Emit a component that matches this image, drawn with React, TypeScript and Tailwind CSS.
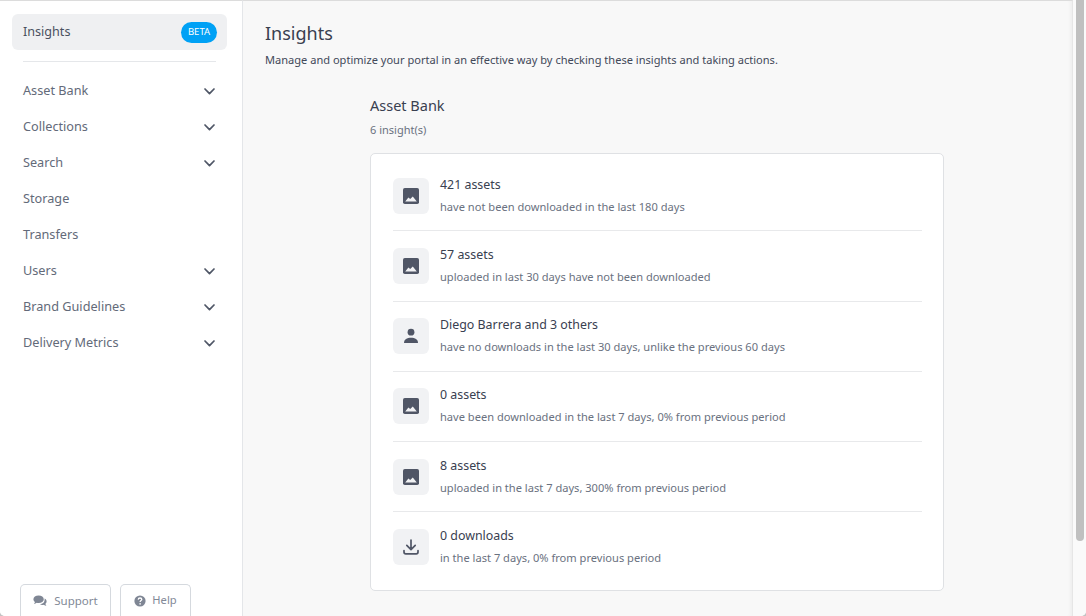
import React from "react";

const font = { fontFamily: '"Noto Sans", sans-serif' };

function Chevron() {
  return (
    <svg width="11" height="7" viewBox="0 0 11 7" fill="none" className="text-[#4f5666]">
      <path d="M1 1 L5.5 5.6 L10 1" stroke="currentColor" strokeWidth="1.7" strokeLinecap="round" strokeLinejoin="round" />
    </svg>
  );
}

function ImageIcon() {
  return (
    <svg width="16" height="16" viewBox="0 0 16 16">
      <rect x="0" y="0" width="16" height="16" rx="1.8" fill="#505666" />
      <path d="M2.2 13.4 L5.4 9.6 L7.2 11 L9.8 8.6 L13.8 13.4 Z" fill="#f1f2f4" />
    </svg>
  );
}

function UserIcon() {
  return (
    <svg width="16" height="16" viewBox="0 0 16 16" fill="#505666">
      <circle cx="8" cy="4.2" r="3.4" />
      <path d="M1 15 C1 11.4 4 9.8 8 9.8 C12 9.8 15 11.4 15 15 Z" />
    </svg>
  );
}

function DownloadIcon() {
  return (
    <svg width="16" height="16" viewBox="0 0 16 16" fill="none" stroke="#505666" strokeWidth="1.7" strokeLinecap="round" strokeLinejoin="round">
      <path d="M8 1 V10.4 M3.8 6.4 L8 10.6 L12.2 6.4" />
      <path d="M1 11.6 V13 C1 14 1.8 14.8 2.8 14.8 H13.2 C14.2 14.8 15 14 15 13 V11.6" />
    </svg>
  );
}

const nav: [string, boolean][] = [
  ["Asset Bank", true],
  ["Collections", true],
  ["Search", true],
  ["Storage", false],
  ["Transfers", false],
  ["Users", true],
  ["Brand Guidelines", true],
  ["Delivery Metrics", true],
];

const rows: [React.ReactNode, string, string][] = [
  [<ImageIcon />, "421 assets", "have not been downloaded in the last 180 days"],
  [<ImageIcon />, "57 assets", "uploaded in last 30 days have not been downloaded"],
  [<UserIcon />, "Diego Barrera and 3 others", "have no downloads in the last 30 days, unlike the previous 60 days"],
  [<ImageIcon />, "0 assets", "have been downloaded in the last 7 days, 0% from previous period"],
  [<ImageIcon />, "8 assets", "uploaded in the last 7 days, 300% from previous period"],
  [<DownloadIcon />, "0 downloads", "in the last 7 days, 0% from previous period"],
];

export default function App() {
  return (
    <div style={font} className="h-[616px] w-[1086px] overflow-hidden bg-[#c4c4c4]">
      <div className="flex h-full overflow-hidden rounded-b-[5px] bg-[#fafafa]">
        <aside className="flex w-[243px] shrink-0 flex-col border-r border-t border-r-[#e4e6e9] border-t-[#dcdcdc] bg-white">
          <div className="ml-3 mr-[15px] mt-[13px] flex h-9 items-center justify-between rounded-md bg-[#eff0f2] pl-[11px] pr-[10px]">
            <span className="text-[12.6px] text-[#4a5060]">Insights</span>
            <span className="flex h-[21px] w-9 items-center justify-center rounded-full bg-[#00a1f5] text-[9.5px] text-white">BETA</span>
          </div>
          <div className="ml-[23px] mr-[26px] mt-[11px] h-px bg-[#e5e7ea]" />
          <nav className="mt-[11px] flex flex-col">
            {nav.map(([label, chev]) => (
              <div key={label} className="flex h-9 items-center justify-between pl-[23px] pr-[27px]">
                <span className="text-[12.7px] text-[#636a79]">{label}</span>
                {chev && <Chevron />}
              </div>
            ))}
          </nav>
          <div className="mt-auto flex gap-[9px] pl-5">
            <div className="flex h-[32px] w-[91px] items-center justify-center gap-[7px] rounded-t-[5px] border border-b-0 border-[#d5d9de] text-[11.5px] text-[#828997]">
              <svg width="14" height="12" viewBox="0 0 14 12" fill="#7f8694">
                <path d="M5.6 0.4 C8.6 0.4 10.8 2 10.8 4.2 C10.8 6.4 8.6 8 5.6 8 C4.9 8 4.3 7.9 3.8 7.8 C3 8.5 2 8.8 0.8 8.9 C1.4 8.3 1.8 7.6 2 6.9 C1 6.3 0.4 5.3 0.4 4.2 C0.4 2 2.6 0.4 5.6 0.4 Z" />
                <path d="M11.6 3.6 C12.9 4.2 13.6 5.2 13.6 6.4 C13.6 7.4 13.1 8.2 12.3 8.8 C12.5 9.5 12.9 10.1 13.4 10.7 C12.4 10.6 11.5 10.2 10.8 9.7 C9.8 10 8.2 10 7 9.3 C9.8 9.2 12 7.4 11.6 3.6 Z" />
              </svg>
              <span>Support</span>
            </div>
            <div className="flex h-[32px] w-[71px] items-center justify-center gap-[6px] rounded-t-[5px] border border-b-0 border-[#d5d9de] text-[11.2px] text-[#828997]">
              <svg width="12" height="12" viewBox="0 0 12 12">
                <circle cx="6" cy="6" r="5.6" fill="#7f8694" />
                <path d="M4.2 4.6 C4.3 3.6 5 3 6 3 C7 3 7.8 3.6 7.8 4.5 C7.8 5.6 6.1 5.6 6.1 6.9" fill="none" stroke="#fff" strokeWidth="1.3" />
                <circle cx="6.1" cy="8.9" r="0.8" fill="#fff" />
              </svg>
              <span>Help</span>
            </div>
          </div>
        </aside>
        <main className="w-[830px] shrink-0 border-r border-t border-r-[#e6e6e6] border-t-[#dcdcdc] bg-[#f8f8f8] pl-[22px] pt-[20px] shadow-[inset_-4px_0_4px_-3px_rgba(0,0,0,0.06)]">
          <h1 className="text-[18px] leading-[25px] text-[#394050]">Insights</h1>
          <p className="mt-[5px] text-[11.07px] leading-[17px] text-[#424858]">
            Manage and optimize your portal in an effective way by checking these insights and taking actions.
          </p>
          <section className="ml-[105px] mt-[27px] w-[574px]">
            <h2 className="text-[14.5px] leading-5 text-[#394050]">Asset Bank</h2>
            <p className="mt-[7px] text-[11px] leading-4 text-[#6a7180]">6 insight(s)</p>
            <div className="mt-[15px] h-[438px] rounded-[5px] border border-[#dfe1e4] bg-white pl-[22px] pr-[21px] pt-[7.3px]">
              {rows.map(([icon, title, sub], i) => (
                <div key={title} className={`flex h-[70.2px] items-center gap-[11px] ${i < 5 ? "border-b border-[#e8e9eb]" : ""}`}>
                  <div className="flex h-9 w-9 shrink-0 items-center justify-center rounded-md bg-[#f1f2f4]">{icon}</div>
                  <div className="mb-[1px] flex flex-col">
                    <span className="text-[12.4px] leading-[17px] text-[#394050]">{title}</span>
                    <span className="mt-[6px] text-[11.1px] leading-4 text-[#6a7180]">{sub}</span>
                  </div>
                </div>
              ))}
            </div>
          </section>
        </main>
        <div className="flex-1 bg-[#fafafa]">
          <div className="ml-[3px] h-[541px] w-2 rounded-b-full bg-[#c0c0c0]" />
        </div>
      </div>
    </div>
  );
}
